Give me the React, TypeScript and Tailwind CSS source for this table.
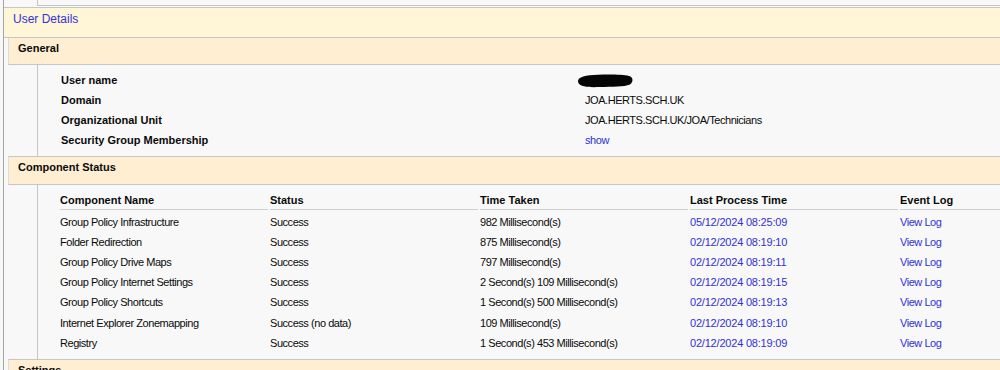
import React from "react";

const rows = [
  ["Group Policy Infrastructure", "Success", "982 Millisecond(s)", "05/12/2024 08:25:09"],
  ["Folder Redirection", "Success", "875 Millisecond(s)", "02/12/2024 08:19:10"],
  ["Group Policy Drive Maps", "Success", "797 Millisecond(s)", "02/12/2024 08:19:11"],
  ["Group Policy Internet Settings", "Success", "2 Second(s) 109 Millisecond(s)", "02/12/2024 08:19:15"],
  ["Group Policy Shortcuts", "Success", "1 Second(s) 500 Millisecond(s)", "02/12/2024 08:19:13"],
  ["Internet Explorer Zonemapping", "Success (no data)", "109 Millisecond(s)", "02/12/2024 08:19:10"],
  ["Registry", "Success", "1 Second(s) 453 Millisecond(s)", "02/12/2024 08:19:09"],
];

const general: [string, React.ReactNode][] = [
  [
    "User name",
    <svg key="b" width="58" height="17" viewBox="0 0 58 17" className="-ml-[9px]">
      <path
        d="M2 9.5 C1.5 5, 10 3.2, 22 2.8 C34 2.3, 47 2.6, 53 4 C57.5 5, 57.5 10, 54 12.5 C48 15, 36 14.6, 24 15 C13 15.4, 2.5 15.2, 2 9.5 Z"
        fill="#050505"
      />
    </svg>,
  ],
  ["Domain", "JOA.HERTS.SCH.UK"],
  ["Organizational Unit", "JOA.HERTS.SCH.UK/JOA/Technicians"],
  ["Security Group Membership", <span key="s" className="text-[#3030d8]">show</span>],
];

const heads = ["Component Name", "Status", "Time Taken", "Last Process Time", "Event Log"];

export default function App() {
  return (
    <div className="w-[1000px] h-[370px] overflow-hidden bg-[#f8f8f8] font-['Liberation_Sans',Arial,sans-serif] text-[11px] text-[#0a0a0a]">
      <div className="ml-[3px] h-full border-l border-[#a4a4a4]">
        <div className="h-[6px] ml-[33px] border-l border-b border-[#c6c6c6]" />
        <div className="mt-[1px] h-[31px] border-y border-[#c6c6c6] bg-[#fff5d7] pl-[9px] pt-[5px] text-[12px] leading-none text-[#3434d6]">
          User Details
        </div>
        <div className="pl-[4px]">
          {/* General */}
          <div className="h-[27px] border-b border-l border-[#c6c6c6] border-l-[#dcdcdc] bg-[#ffeed2] pl-[9px] pt-[5px] font-bold leading-none">
            General
          </div>
          <div className="ml-[29px] h-[91px] border-l border-[#c6c6c6] pl-[23px] pt-[5px]">
            {general.map(([k, v]) => (
              <div key={k} className="grid h-[20px] grid-cols-[524px_auto] items-center leading-none">
                <span className="font-bold">{k}</span>
                <span className="flex items-center tracking-[-0.45px]">{v}</span>
              </div>
            ))}
          </div>
          {/* Component Status */}
          <div className="h-[29px] border-y border-l border-[#c6c6c6] border-l-[#dcdcdc] bg-[#ffeed2] pl-[9px] pt-[5px] font-bold leading-none">
            Component Status
          </div>
          <div className="ml-[29px] h-[174px] border-l border-[#c6c6c6] pl-[22px] pt-[6px]">
            <div className="grid grid-cols-[208px_208px_208px_208px_208px] gap-x-[2px] w-[1100px]">
              {heads.map((h) => (
                <div key={h} className="h-[19px] border-b border-[#cfcfcf] pt-[4px] font-bold leading-none">
                  {h}
                </div>
              ))}
            </div>
            <div className="mt-[2px] w-[1100px]">
              {rows.map((r) => (
                <div
                  key={r[0]}
                  className="grid h-[20.2px] grid-cols-[208px_208px_208px_208px_208px] gap-x-[2px] items-center leading-none tracking-[-0.45px]"
                >
                  <span>{r[0]}</span>
                  <span>{r[1]}</span>
                  <span>{r[2]}</span>
                  <span className="text-[#3030d8] tracking-[-0.2px]">{r[3]}</span>
                  <span className="text-[#3030d8]">View Log</span>
                </div>
              ))}
            </div>
          </div>
          {/* Settings */}
          <div className="h-[30px] border-t border-l border-[#c6c6c6] border-l-[#dcdcdc] bg-[#ffeed2] pl-[9px] pt-[5px] font-bold leading-none">
            Settings
          </div>
        </div>
      </div>
    </div>
  );
}
